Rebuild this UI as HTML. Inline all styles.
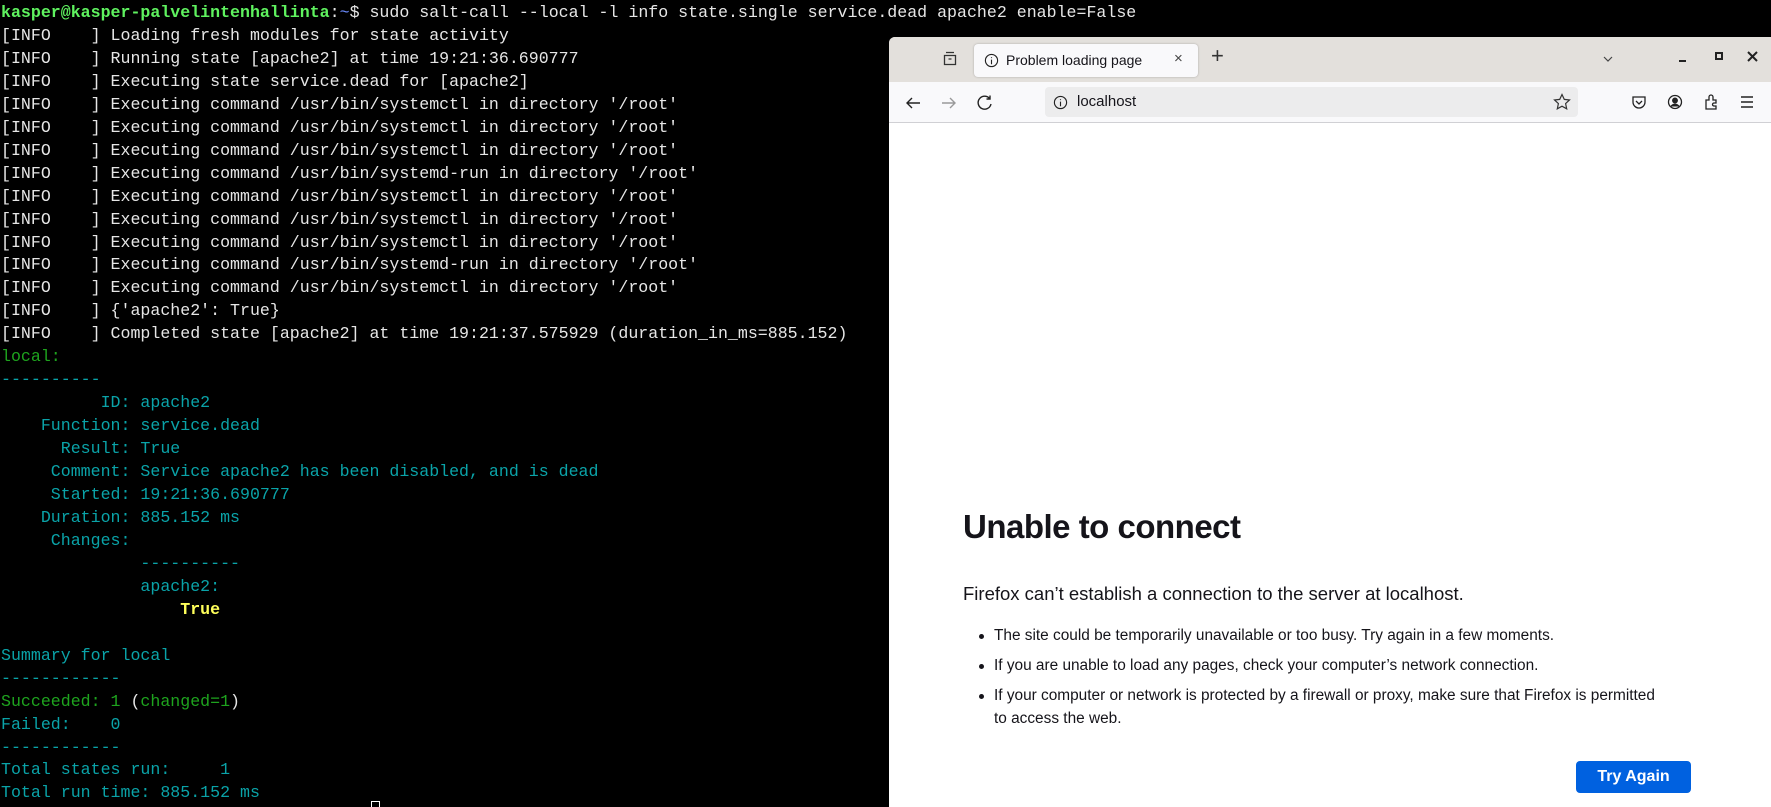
<!DOCTYPE html>
<html><head><meta charset="utf-8"><style>
*{margin:0;padding:0;box-sizing:border-box}
body{width:1771px;height:807px;background:#000;overflow:hidden;position:relative;font-family:"Liberation Sans",sans-serif}
pre{position:absolute;left:1px;top:2px;font-family:"Liberation Mono","DejaVu Sans Mono",monospace;font-size:16.6px;line-height:22.95px;color:#e6e6e6;white-space:pre}
.g{color:#5ff25f;font-weight:bold}.c{color:#0aa3a8}.gr{color:#1ea31e}.y{color:#ffff5a;font-weight:bold}.bl{color:#6b8cff}
#br{position:absolute;left:889px;top:37px;width:882px;height:770px;background:#fff;border-radius:6px 0 0 0;overflow:hidden}
#tabs{position:absolute;left:0;top:0;width:882px;height:45px;background:#e3e0dc}
#tab{position:absolute;left:85px;top:7px;width:224px;height:33px;background:#f9f9fb;border-radius:4px;box-shadow:0 0 2px rgba(0,0,0,.25);font-size:14px;color:#15141a}
#nav{position:absolute;left:0;top:45px;width:882px;height:41px;background:#f9f9fb;border-bottom:1px solid #d0d0d4}
#url{position:absolute;left:156px;top:5px;width:533px;height:30px;background:#ececed;border-radius:4px;font-size:15px;color:#15141a}
.ic{position:absolute}
h1{position:absolute;left:74px;top:471px;font-size:33px;font-weight:600;color:#15141a;letter-spacing:-0.5px}
p.m{position:absolute;left:74px;top:546px;font-size:18.5px;color:#15141a}
ul{position:absolute;left:105px;top:587px;font-size:15.4px;color:#15141a;line-height:23px;list-style:none}
ul li{position:relative;margin-bottom:7px}
ul li:before{content:"";position:absolute;left:-15px;top:10px;width:5px;height:5px;border-radius:50%;background:#15141a}
#btn{position:absolute;left:687px;top:724px;width:115px;height:32px;background:#0061e0;border-radius:4px;color:#fff;font-size:16px;font-weight:600;text-align:center;line-height:32px}
</style></head><body>
<pre><span class="g">kasper@kasper-palvelintenhallinta</span>:<span class="bl">~</span>$ sudo salt-call --local -l info state.single service.dead apache2 enable=False
[INFO    ] Loading fresh modules for state activity
[INFO    ] Running state [apache2] at time 19:21:36.690777
[INFO    ] Executing state service.dead for [apache2]
[INFO    ] Executing command /usr/bin/systemctl in directory '/root'
[INFO    ] Executing command /usr/bin/systemctl in directory '/root'
[INFO    ] Executing command /usr/bin/systemctl in directory '/root'
[INFO    ] Executing command /usr/bin/systemd-run in directory '/root'
[INFO    ] Executing command /usr/bin/systemctl in directory '/root'
[INFO    ] Executing command /usr/bin/systemctl in directory '/root'
[INFO    ] Executing command /usr/bin/systemctl in directory '/root'
[INFO    ] Executing command /usr/bin/systemd-run in directory '/root'
[INFO    ] Executing command /usr/bin/systemctl in directory '/root'
[INFO    ] {'apache2': True}
[INFO    ] Completed state [apache2] at time 19:21:37.575929 (duration_in_ms=885.152)
<span class="gr">local:</span>
<span class="c">----------</span>
<span class="c">          ID: apache2</span>
<span class="c">    Function: service.dead</span>
<span class="c">      Result: True</span>
<span class="c">     Comment: Service apache2 has been disabled, and is dead</span>
<span class="c">     Started: 19:21:36.690777</span>
<span class="c">    Duration: 885.152 ms</span>
<span class="c">     Changes:</span>
<span class="c">              ----------</span>
<span class="c">              apache2:</span>
                  <span class="y">True</span>

<span class="c">Summary for local</span>
<span class="c">------------</span>
<span class="gr">Succeeded: 1</span> (<span class="gr">changed=1</span>)
<span class="c">Failed:    0</span>
<span class="c">------------</span>
<span class="c">Total states run:     1</span>
<span class="c">Total run time: 885.152 ms</span></pre>
<div style="position:absolute;left:371px;top:801px;width:9px;height:6px;border:1px solid #fff;border-bottom:none"></div>
<div id="br">
 <div id="tabs">
  <svg class="ic" style="left:53px;top:14px" width="16" height="16" viewBox="0 0 16 16" fill="none" stroke="#333" stroke-width="1.3"><path d="M4 1.5h8M2.5 4.5h11v9h-11z M6.5 8h3"/></svg>
  <div id="tab">
   <svg class="ic" style="left:10px;top:9px" width="15" height="15" viewBox="0 0 16 16" fill="none" stroke="#222" stroke-width="1.2"><circle cx="8" cy="8" r="6.5"/><path d="M8 7v5M8 4.5v1"/></svg>
   <span style="position:absolute;left:32px;top:8px">Problem loading page</span>
   <span style="position:absolute;left:200px;top:6px;font-size:15px;color:#444">×</span>
  </div>
  <span style="position:absolute;left:322px;top:6px;font-size:22px;color:#333;font-weight:300">+</span>
  <svg class="ic" style="left:713px;top:17px" width="12" height="10" viewBox="0 0 12 10" fill="none" stroke="#444" stroke-width="1.2"><path d="M2 3l4 4 4-4"/></svg>
  <div style="position:absolute;left:790px;top:23px;width:7px;height:2px;background:#222"></div>
  <div style="position:absolute;left:826px;top:15px;width:8px;height:8px;border:2px solid #222"></div>
  <svg class="ic" style="left:858px;top:14px" width="11" height="11" viewBox="0 0 11 11" stroke="#222" stroke-width="2"><path d="M1 1l9 9M10 1l-9 9"/></svg>
 </div>
 <div id="nav">
  <svg class="ic" style="left:15px;top:12px" width="18" height="18" viewBox="0 0 18 18" fill="none" stroke="#222" stroke-width="1.4"><path d="M16 9H3M8 4L3 9l5 5"/></svg>
  <svg class="ic" style="left:51px;top:12px" width="18" height="18" viewBox="0 0 18 18" fill="none" stroke="#999" stroke-width="1.4"><path d="M2 9h13M10 4l5 5-5 5"/></svg>
  <svg class="ic" style="left:87px;top:12px" width="18" height="18" viewBox="0 0 18 18" fill="none" stroke="#222" stroke-width="1.4"><path d="M14 5A6.5 6.5 0 1 0 15 10M14 1.5V5h-3.5"/></svg>
  <div id="url">
   <svg class="ic" style="left:8px;top:8px" width="15" height="15" viewBox="0 0 16 16" fill="none" stroke="#222" stroke-width="1.2"><circle cx="8" cy="8" r="6.5"/><path d="M8 7v5M8 4.5v1"/></svg>
   <span style="position:absolute;left:32px;top:6px">localhost</span>
   <svg class="ic" style="left:508px;top:6px" width="18" height="18" viewBox="0 0 18 18" fill="none" stroke="#333" stroke-width="1.2"><path d="M9 1.5l2.3 4.9 5.2.6-3.9 3.6 1.1 5.2L9 13.2l-4.7 2.6 1.1-5.2L1.5 7l5.2-.6z"/></svg>
  </div>
  <svg class="ic" style="left:742px;top:12px" width="16" height="16" viewBox="0 0 16 16" fill="none" stroke="#222" stroke-width="1.3"><path d="M2 3h12v5a6 6 0 0 1-12 0z M5 7l3 3 3-3"/></svg>
  <svg class="ic" style="left:778px;top:12px" width="16" height="16" viewBox="0 0 16 16" fill="none" stroke="#222" stroke-width="1.3"><circle cx="8" cy="8" r="6.5"/><circle cx="8" cy="6.5" r="2.3" fill="#222"/><path d="M4 12.5c2-3 6-3 8 0" fill="#222"/></svg>
  <svg class="ic" style="left:814px;top:11px" width="16" height="18" viewBox="0 0 16 18" fill="none" stroke="#222" stroke-width="1.3"><path d="M3 16V7h3V4a2 2 0 0 1 4 0v3h3v3h-2a1.5 1.5 0 0 0 0 3h2v3z"/></svg>
  <svg class="ic" style="left:850px;top:12px" width="16" height="16" viewBox="0 0 16 16" stroke="#222" stroke-width="1.4"><path d="M2 3h12M2 8h12M2 13h12"/></svg>
 </div>
 <h1>Unable to connect</h1>
 <p class="m">Firefox can’t establish a connection to the server at localhost.</p>
 <ul>
  <li>The site could be temporarily unavailable or too busy. Try again in a few moments.</li>
  <li>If you are unable to load any pages, check your computer’s network connection.</li>
  <li>If your computer or network is protected by a firewall or proxy, make sure that Firefox is permitted<br>to access the web.</li>
 </ul>
 <div id="btn">Try Again</div>
</div>
</body></html>
